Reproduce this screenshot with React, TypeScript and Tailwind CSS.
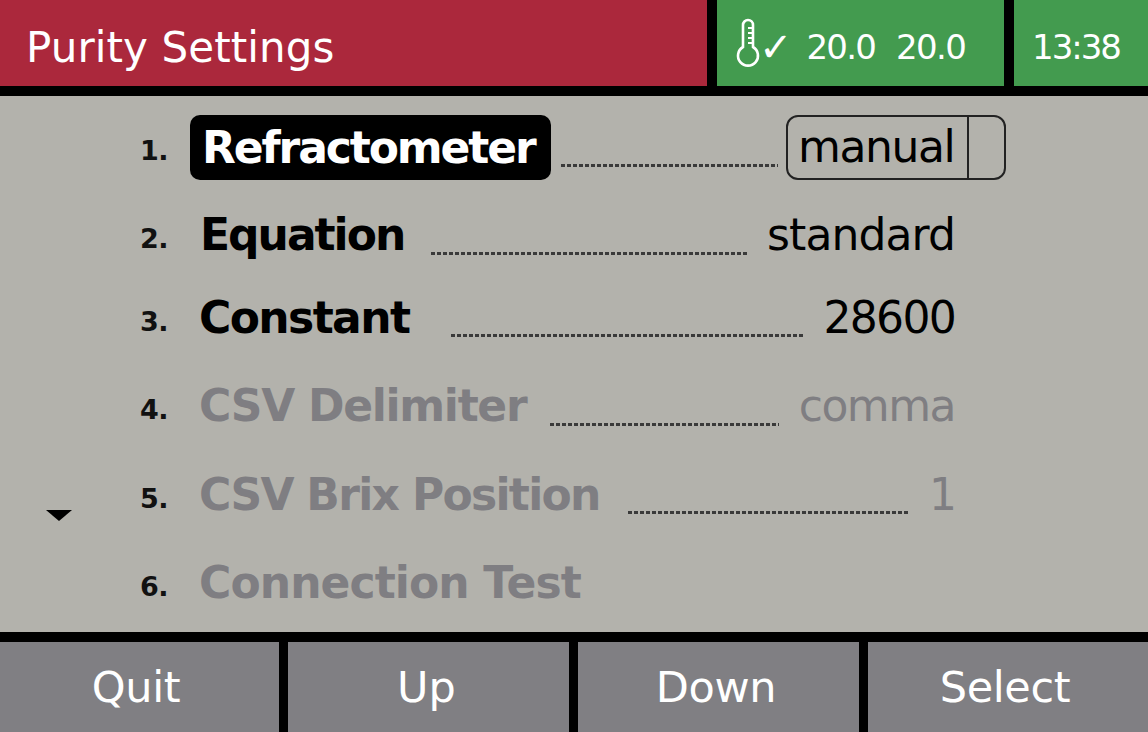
import React from "react";

type Row = {
  n: number;
  label: string;
  labelClass: string;
  value?: string;
  valueClass?: string;
  dots?: string;
  muted?: boolean;
  rowClass: string;
};

const rows: Row[] = [
  { n: 1, label: "Refractometer", labelClass: "tracking-[-2.1px]", rowClass: "mt-0" },
  {
    n: 2,
    label: "Equation",
    labelClass: "tracking-[-2px]",
    value: "standard",
    valueClass: "tracking-[-0.9px]",
    dots: "ml-[27px] mr-[19px] mb-[20px]",
    rowClass: "mt-[8px]",
  },
  {
    n: 3,
    label: "Constant",
    labelClass: "tracking-[-1.6px] -ml-px",
    value: "28600",
    valueClass: "tracking-[-1.7px]",
    dots: "ml-[42px] mr-[21px] mb-[21px]",
    rowClass: "mt-[3px]",
  },
  {
    n: 4,
    label: "CSV Delimiter",
    labelClass: "tracking-[-1.3px] -ml-px",
    value: "comma",
    valueClass: "tracking-[-1.5px]",
    dots: "ml-[24px] mr-[20px] mb-[20px]",
    muted: true,
    rowClass: "mt-[8px]",
  },
  {
    n: 5,
    label: "CSV Brix Position",
    labelClass: "tracking-[-1.7px] -ml-px",
    value: "1",
    valueClass: "-mr-[2px]",
    dots: "ml-[28px] mr-[21px] mb-[21px]",
    muted: true,
    rowClass: "mt-[9px]",
  },
  { n: 6, label: "Connection Test", labelClass: "tracking-[-0.9px] -ml-px", muted: true, rowClass: "mt-[8px]" },
];

function Thermometer() {
  return (
    <svg width="26" height="50" viewBox="0 0 26 50" fill="none" stroke="white" strokeWidth="2.6" className="shrink-0">
      <path d="M8 29V7a5 5 0 0 1 10 0v22a10 10 0 1 1-10 0z" />
      <path d="M18 10h-5M18 15h-5M18 20h-5M18 25h-5" strokeWidth="2" />
    </svg>
  );
}

function Dots({ className }: { className: string }) {
  return (
    <div
      className={`flex-1 self-end h-[3px] bg-[repeating-linear-gradient(90deg,#3a3a3a_0_4px,transparent_4px_6px)] ${className}`}
    />
  );
}

function FooterButton({ label, w, tx }: { label: string; w: string; tx: string }) {
  return (
    <div className={`${w} bg-[#807f83] flex items-center justify-center text-white text-[43px] leading-none`}>
      <span className={tx}>{label}</span>
    </div>
  );
}

export default function App() {
  return (
    <div className="w-[1148px] h-[732px] overflow-hidden bg-black flex flex-col font-['DejaVu_Sans',sans-serif]">
      <header className="h-[96px] flex border-b-[10px] border-black shrink-0">
        <div className="w-[707px] bg-[#ab283c] text-white text-[42px] flex items-center pl-[26px] pt-2 tracking-[0.1px]">
          Purity Settings
        </div>
        <div className="w-[287px] ml-[10px] bg-[#439b4f] text-white flex items-center pl-[18px] text-[34px]">
          <Thermometer />
          <span className="text-[40px] leading-none -ml-[2px] mr-[14px] pt-2">✓</span>
          <span className="tracking-[-1.8px] mr-[21px] pt-2">20.0</span>
          <span className="tracking-[-1.6px] pt-2">20.0</span>
        </div>
        <div className="flex-1 ml-[10px] bg-[#439b4f] text-white text-[34px] flex items-center justify-center pt-2 pr-[10px] tracking-[-2px]">
          13:38
        </div>
      </header>

      <main className="relative h-[536px] bg-[#b3b2ac] pl-[140px] pt-[11px] shrink-0">
        <span className="absolute left-[46px] top-[414px] w-0 h-0 border-x-[13px] border-x-transparent border-t-[11px] border-t-black" />
        {rows.map((r) => (
          <div key={r.n} className={`${r.rowClass} h-[80px] w-[815px] flex items-center`}>
            <span className="w-[60px] shrink-0 text-[27px] font-bold text-[#111] pt-2 tracking-[-0.5px]">{r.n}.</span>
            {r.n === 1 ? (
              <>
                <span className="-ml-[10px] h-[65px] w-[361px] rounded-[10px] bg-black text-white text-[44px] font-bold flex items-center pl-[12px] pt-px shrink-0">
                  <span className={r.labelClass}>{r.label}</span>
                </span>
                <Dots className="ml-[10px] mr-[8px] mb-[20px]" />
                <div className="w-[220px] -mr-[51px] h-[65px] rounded-[12px] border-2 border-[#222] flex shrink-0">
                  <span className="w-[181px] border-r-2 border-[#222] text-[44px] text-black flex items-center pl-[10px] tracking-[-1.4px]">
                    manual
                  </span>
                </div>
              </>
            ) : (
              <>
                <span className={`text-[44px] font-bold shrink-0 ${r.labelClass} ${r.muted ? "text-[#7f7e82]" : "text-black"}`}>
                  {r.label}
                </span>
                {r.dots && <Dots className={r.dots} />}
                {r.value && (
                  <span className={`text-[44px] shrink-0 ${r.valueClass} ${r.muted ? "text-[#7f7e82]" : "text-black"}`}>
                    {r.value}
                  </span>
                )}
              </>
            )}
          </div>
        ))}
      </main>

      <footer className="h-[100px] border-t-[10px] border-black flex gap-[9px] shrink-0">
        <FooterButton label="Quit" w="w-[279px]" tx="-ml-[7px] tracking-[-0.3px]" />
        <FooterButton label="Up" w="w-[281px]" tx="-ml-[4px]" />
        <FooterButton label="Down" w="w-[281px]" tx="-ml-[5px] tracking-[-0.3px]" />
        <FooterButton label="Select" w="flex-1" tx="-ml-[6px] tracking-[-0.4px]" />
      </footer>
    </div>
  );
}
